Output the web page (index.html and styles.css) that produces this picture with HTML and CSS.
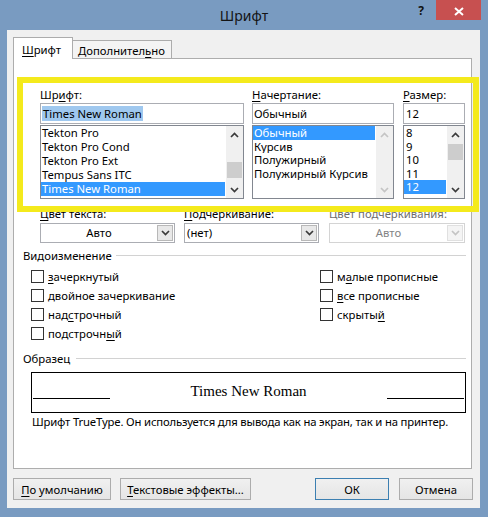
FILE: index.html
```html
<!DOCTYPE html>
<html lang="ru">
<head>
<meta charset="utf-8">
<title>Шрифт</title>
<link rel="stylesheet" href="styles.css">
</head>
<body>
<div class="window">
  <div class="titlebar">
    <div class="title">Шрифт</div>
    <div class="controls">
      <div class="help">?</div>
      <div class="close"><svg width="10" height="9" viewBox="0 0 10 9"><path d="M1 1L9 8M9 1L1 8" stroke="#fff" stroke-width="2" fill="none"/></svg></div>
    </div>
  </div>
  <div class="client">
    <div class="tabs">
      <div class="tab tab-active"><u>Ш</u>рифт</div>
      <div class="tab tab-inactive">Дополнител<u>ь</u>но</div>
    </div>
    <div class="page">
      <div class="fontrow">
        <div class="col col-font">
          <div class="lbl">Шр<u>и</u>фт:</div>
          <div class="input"><span class="selected-text">Times New Roman</span></div>
          <div class="list">
            <div class="items items-14">
              <div class="item">Tekton Pro</div>
              <div class="item">Tekton Pro Cond</div>
              <div class="item">Tekton Pro Ext</div>
              <div class="item">Tempus Sans ITC</div>
              <div class="item sel">Times New Roman</div>
            </div>
            <div class="scroll">
              <div class="sbtn"><svg width="9" height="6" viewBox="0 0 9 6"><path d="M1 5L4.5 1.5L8 5" fill="none" stroke="#3a3a3a" stroke-width="1.7"/></svg></div>
              <div class="track"><div class="thumb thumb-font"></div></div>
              <div class="sbtn"><svg width="9" height="6" viewBox="0 0 9 6"><path d="M1 1L4.5 4.5L8 1" fill="none" stroke="#3a3a3a" stroke-width="1.7"/></svg></div>
            </div>
          </div>
        </div>
        <div class="col col-style">
          <div class="lbl"><u>Н</u>ачертание:</div>
          <div class="input">Обычный</div>
          <div class="list">
            <div class="items items-13">
              <div class="item sel">Обычный</div>
              <div class="item">Курсив</div>
              <div class="item">Полужирный</div>
              <div class="item">Полужирный Курсив</div>
            </div>
            <div class="scroll">
              <div class="sbtn"><svg width="9" height="6" viewBox="0 0 9 6"><path d="M1 5L4.5 1.5L8 5" fill="none" stroke="#c4c4c4" stroke-width="1.7"/></svg></div>
              <div class="track"></div>
              <div class="sbtn"><svg width="9" height="6" viewBox="0 0 9 6"><path d="M1 1L4.5 4.5L8 1" fill="none" stroke="#c4c4c4" stroke-width="1.7"/></svg></div>
            </div>
          </div>
        </div>
        <div class="col col-size">
          <div class="lbl"><u>Р</u>азмер:</div>
          <div class="input input-size">12</div>
          <div class="list">
            <div class="items items-13 items-size">
              <div class="item">8</div>
              <div class="item">9</div>
              <div class="item">10</div>
              <div class="item">11</div>
              <div class="item sel">12</div>
            </div>
            <div class="scroll">
              <div class="sbtn"><svg width="9" height="6" viewBox="0 0 9 6"><path d="M1 5L4.5 1.5L8 5" fill="none" stroke="#3a3a3a" stroke-width="1.7"/></svg></div>
              <div class="track"><div class="thumb thumb-size"></div></div>
              <div class="sbtn"><svg width="9" height="6" viewBox="0 0 9 6"><path d="M1 1L4.5 4.5L8 1" fill="none" stroke="#3a3a3a" stroke-width="1.7"/></svg></div>
            </div>
          </div>
        </div>
      </div>

      <div class="comborow">
        <div class="ccol ccol1">
          <div class="lbl"><u>Ц</u>вет текста:</div>
          <div class="combo"><div class="val val-center">Авто</div><div class="dd"><svg width="9" height="6" viewBox="0 0 9 6"><path d="M1 1L4.5 4.5L8 1" fill="none" stroke="#3a3a3a" stroke-width="1.7"/></svg></div></div>
        </div>
        <div class="ccol ccol2">
          <div class="lbl"><u>П</u>одчеркивание:</div>
          <div class="combo"><div class="val val-left">(нет)</div><div class="dd"><svg width="9" height="6" viewBox="0 0 9 6"><path d="M1 1L4.5 4.5L8 1" fill="none" stroke="#3a3a3a" stroke-width="1.7"/></svg></div></div>
        </div>
        <div class="ccol ccol3">
          <div class="lbl lbl-disabled">Цвет подчеркивания:</div>
          <div class="combo combo-disabled"><div class="val val-center">Авто</div><div class="dd"><svg width="9" height="6" viewBox="0 0 9 6"><path d="M1 1L4.5 4.5L8 1" fill="none" stroke="#c4c4c4" stroke-width="1.7"/></svg></div></div>
        </div>
      </div>

      <div class="group group-effects"><span class="group-label">Видоизменение</span><span class="group-line"></span></div>
      <div class="checks">
        <div class="check"><span class="box"></span><span><u>з</u>ачеркнутый</span></div>
        <div class="check"><span class="box"></span><span>м<u>а</u>лые прописные</span></div>
        <div class="check"><span class="box"></span><span>двойное зачеркивание</span></div>
        <div class="check"><span class="box"></span><span><u>в</u>се прописные</span></div>
        <div class="check"><span class="box"></span><span>над<u>с</u>трочный</span></div>
        <div class="check"><span class="box"></span><span>скрыты<u>й</u></span></div>
        <div class="check"><span class="box"></span><span>подстрочн<u>ы</u>й</span></div>
      </div>

      <div class="group group-sample"><span class="group-label">Образец</span><span class="group-line line-sample"></span></div>
      <div class="preview">
        <span class="pline"></span>
        <span class="ptext">Times New Roman</span>
        <span class="pline"></span>
      </div>
      <div class="desc">Шрифт TrueType. Он используется для вывода как на экран, так и на принтер.</div>
    </div>

    <div class="buttons">
      <div class="btn b-default"><span><u>П</u>о умолчанию</span></div>
      <div class="btn b-effects"><span><u>Т</u>екстовые эффекты...</span></div>
      <div class="btn b-ok">ОК</div>
      <div class="btn b-cancel">Отмена</div>
    </div>
  </div>
  <div class="highlight"></div>
</div>
</body>
</html>
```
FILE: styles.css
```css
* { box-sizing: border-box; }
html, body { margin: 0; padding: 0; }
body {
  width: 488px;
  height: 517px;
  overflow: hidden;
  background: #799bc1;
  font-family: "Noto Sans", "DejaVu Sans", sans-serif;
  font-size: 11.3px;
  line-height: 15px;
  color: #000;
}
u { text-decoration-thickness: 1px; text-underline-offset: 2px; }
.window {
  position: relative;
  width: 488px;
  height: 517px;
  display: flex;
  flex-direction: column;
}
.titlebar {
  height: 30px;
  display: grid;
  grid-template-columns: 1fr auto 1fr;
  align-items: start;
}
.title {
  grid-column: 2;
  font-size: 14px;
  line-height: 31px;
  color: #141414;
}
.controls {
  grid-column: 3;
  justify-self: end;
  display: flex;
  align-items: flex-start;
  margin-right: 7px;
}
.help {
  width: 14px;
  margin-right: 8px;
  font-weight: bold;
  font-size: 12px;
  line-height: 22px;
  text-align: center;
  color: #111;
}
.close {
  width: 45px;
  height: 20px;
  background: #c75050;
  display: flex;
  align-items: center;
  justify-content: center;
  padding-top: 2px;
}
.close svg { display: block; }

.client {
  margin: 0 8px 0 7px;
  height: 478px;
  background: #f0f0f0;
  padding: 7px 7px 0 6px;
}
.tabs {
  display: flex;
  height: 22px;
  position: relative;
  z-index: 1;
}
.tab { border: 1px solid #acacac; border-bottom: none; white-space: nowrap; }
.tab-active {
  width: 60px;
  height: 22px;
  background: #fff;
  padding: 4px 0 0 8px;
}
.tab-inactive {
  width: 99px;
  height: 18px;
  margin-top: 3px;
  border-left: none;
  background: #f4f4f4;
  padding: 2px 0 0 5px;
}
.page {
  margin-top: -1px;
  width: 459px;
  height: 411px;
  background: #fff;
  border: 1px solid #adadad;
  padding: 28px 5px 0 26px;
}

.fontrow { display: flex; }
.col-font { width: 204px; }
.col-style { width: 142px; margin-left: 8px; }
.col-size { width: 62px; margin-left: 9px; }
.lbl { height: 15px; white-space: nowrap; }
.lbl-disabled { color: #6d6d6d; }
.input {
  margin-top: 1px;
  height: 21px;
  border: 1px solid #abadb3;
  background: #fff;
  display: flex;
  align-items: center;
  padding-left: 1px;
  white-space: nowrap;
}
.input-size { padding-left: 2px; }
.selected-text { background: #9fc8ef; padding: 0 1px; line-height: 15px; }
.list {
  margin-top: 1px;
  height: 74px;
  border: 1px solid #828790;
  background: #fff;
  display: flex;
}
.items { flex: 1; min-width: 0; }
.item {
  padding-left: 1px;
  margin-right: 1px;
  white-space: nowrap;
  overflow: hidden;
}
.items-14 .item { height: 14px; line-height: 14px; }
.items-13 .item { height: 13.5px; line-height: 13.5px; }
.items-size .item { padding-left: 2px; }
.item.sel { background: #3399ff; color: #fff; }
.scroll {
  width: 17px;
  display: flex;
  flex-direction: column;
  background: #f0f0f0;
}
.sbtn {
  height: 17px;
  display: flex;
  align-items: center;
  justify-content: center;
}
.sbtn svg { display: block; }
.track { flex: 1; }
.thumb { background: #cdcdcd; height: 16px; margin: 0 1px; }
.thumb-font { margin-top: 19px; }
.thumb-size { margin-top: 1px; }

.comborow { display: flex; margin-top: 7px; }
.ccol1 { width: 135px; }
.ccol2 { width: 135px; margin-left: 9px; }
.ccol3 { width: 136px; margin-left: 10px; }
.combo {
  margin-top: 2px;
  height: 20px;
  border: 1px solid #abadb3;
  background: #fff;
  display: flex;
}
.val { flex: 1; line-height: 18px; white-space: nowrap; }
.val-center { text-align: center; }
.val-left { padding-left: 2px; }
.dd {
  width: 16px;
  margin: 1px 1px 1px 0;
  border: 1px solid #b8b8b8;
  background: #e8e8e8;
  display: flex;
  align-items: center;
  justify-content: center;
}
.dd svg { display: block; }
.combo-disabled { border-color: #d4d4d4; color: #838383; }
.combo-disabled .dd { border-color: #e0e0e0; background: #f4f4f4; }

.group {
  display: flex;
  align-items: center;
  margin-left: -17px;
}
.group-effects { margin-top: 5px; }
.group-sample { margin-top: 8px; }
.group-label { white-space: nowrap; }
.group-line {
  flex: 1;
  height: 1px;
  background: #d2d2d2;
  margin-left: 4px;
}
.line-sample { margin-left: 6px; }

.checks {
  display: grid;
  grid-template-columns: 289px auto;
  grid-auto-rows: 19px;
  margin-top: 4px;
  margin-left: -9px;
}
.check {
  display: flex;
  align-items: center;
  white-space: nowrap;
}
.box {
  width: 13px;
  height: 13px;
  border: 1px solid #333;
  background: #fff;
  margin-right: 4px;
  flex: none;
}

.preview {
  margin: 6px 0 0 -9px;
  width: 435px;
  height: 41px;
  border: 1px solid #000;
  padding: 10px 1px 0;
  display: flex;
  justify-content: space-between;
  align-items: flex-start;
}
.pline {
  width: 77px;
  height: 16px;
  border-bottom: 1px solid #000;
}
.ptext {
  font-family: "Liberation Serif", "Times New Roman", serif;
  font-size: 15px;
  line-height: 17px;
  white-space: nowrap;
}
.desc {
  margin: 1px 0 0 -8px;
  white-space: nowrap;
  letter-spacing: -0.17px;
}

.buttons { display: flex; margin-top: 9px; }
.btn {
  height: 22px;
  border: 1px solid #acacac;
  background: linear-gradient(#f0f0f0, #e5e5e5);
  display: flex;
  align-items: center;
  justify-content: center;
  white-space: nowrap;
}
.b-default { width: 98px; }
.b-effects { width: 131px; margin-left: 9px; }
.b-ok { width: 74px; margin-left: auto; border-color: #3c7fb1; }
.b-cancel { width: 74px; margin-left: 10px; }

.highlight {
  position: absolute;
  left: 17px;
  top: 77px;
  width: 462px;
  height: 135px;
  border: 6px solid #f4ea1c;
  pointer-events: none;
}
```
